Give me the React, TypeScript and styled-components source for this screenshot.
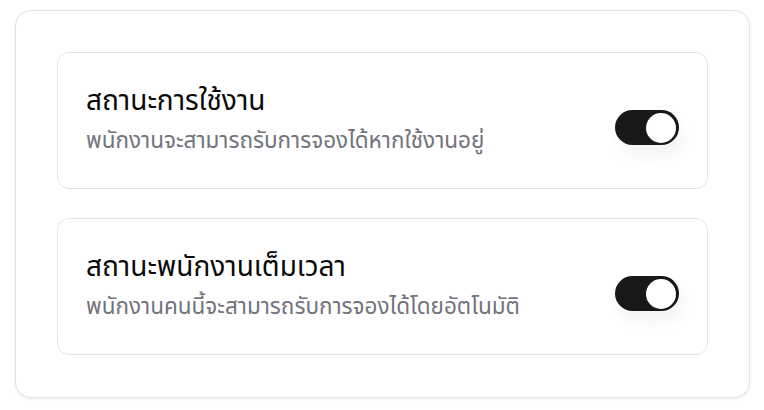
import React, { useState } from "react";
import styled, { createGlobalStyle } from "styled-components";

const Global = createGlobalStyle`
  html, body { margin: 0; padding: 0; background: #ffffff; }
  body { font-family: "Noto Sans", "Noto Sans Thai", "Leelawadee UI", sans-serif; }
  * { box-sizing: border-box; }
`;

const Page = styled.div`
  width: 764px;
  height: 410px;
  padding: 10px 14px 13px 15px;
`;

const Panel = styled.div`
  border: 1px solid #e4e4e7;
  border-radius: 16px;
  box-shadow: 0 1px 3px rgba(0, 0, 0, 0.08);
  padding: 41px 41px 42px 41px;
  display: flex;
  flex-direction: column;
  gap: 29px;
  background: #fff;
`;

const Row = styled.div`
  border: 1px solid #e4e4e7;
  border-radius: 12px;
  height: 137px;
  padding: 0 28px;
  display: flex;
  align-items: center;
  justify-content: space-between;
`;

const Texts = styled.div`
  display: flex;
  flex-direction: column;
  gap: 8px;
  padding-bottom: 6px;
`;

const Title = styled.div`
  font-size: 28px;
  line-height: 36px;
  color: #0a0a0a;
`;

const Desc = styled.div`
  font-size: 22.5px;
  line-height: 30px;
  color: #73737d;
`;

const Track = styled.button<{ $on: boolean }>`
  width: 64px;
  height: 35px;
  margin-top: 14px;
  border: none;
  border-radius: 18px;
  padding: 3px;
  background: ${(p) => (p.$on ? "#18181b" : "#d4d4d8")};
  display: flex;
  justify-content: ${(p) => (p.$on ? "flex-end" : "flex-start")};
  align-items: center;
  cursor: pointer;
  box-shadow: 4px 10px 15px rgba(0, 0, 0, 0.05);
  flex-shrink: 0;
`;

const Knob = styled.span`
  width: 30px;
  height: 30px;
  border-radius: 50%;
  background: #ffffff;
`;

function Toggle() {
  const [on, setOn] = useState(true);
  return (
    <Track $on={on} onClick={() => setOn(!on)} aria-pressed={on}>
      <Knob />
    </Track>
  );
}

const items = [
  { title: "สถานะการใช้งาน", desc: "พนักงานจะสามารถรับการจองได้หากใช้งานอยู่" },
  { title: "สถานะพนักงานเต็มเวลา", desc: "พนักงานคนนี้จะสามารถรับการจองได้โดยอัตโนมัติ" },
];

export default function App() {
  return (
    <>
      <Global />
      <Page>
        <Panel>
          {items.map((it) => (
            <Row key={it.title}>
              <Texts>
                <Title>{it.title}</Title>
                <Desc>{it.desc}</Desc>
              </Texts>
              <Toggle />
            </Row>
          ))}
        </Panel>
      </Page>
    </>
  );
}
